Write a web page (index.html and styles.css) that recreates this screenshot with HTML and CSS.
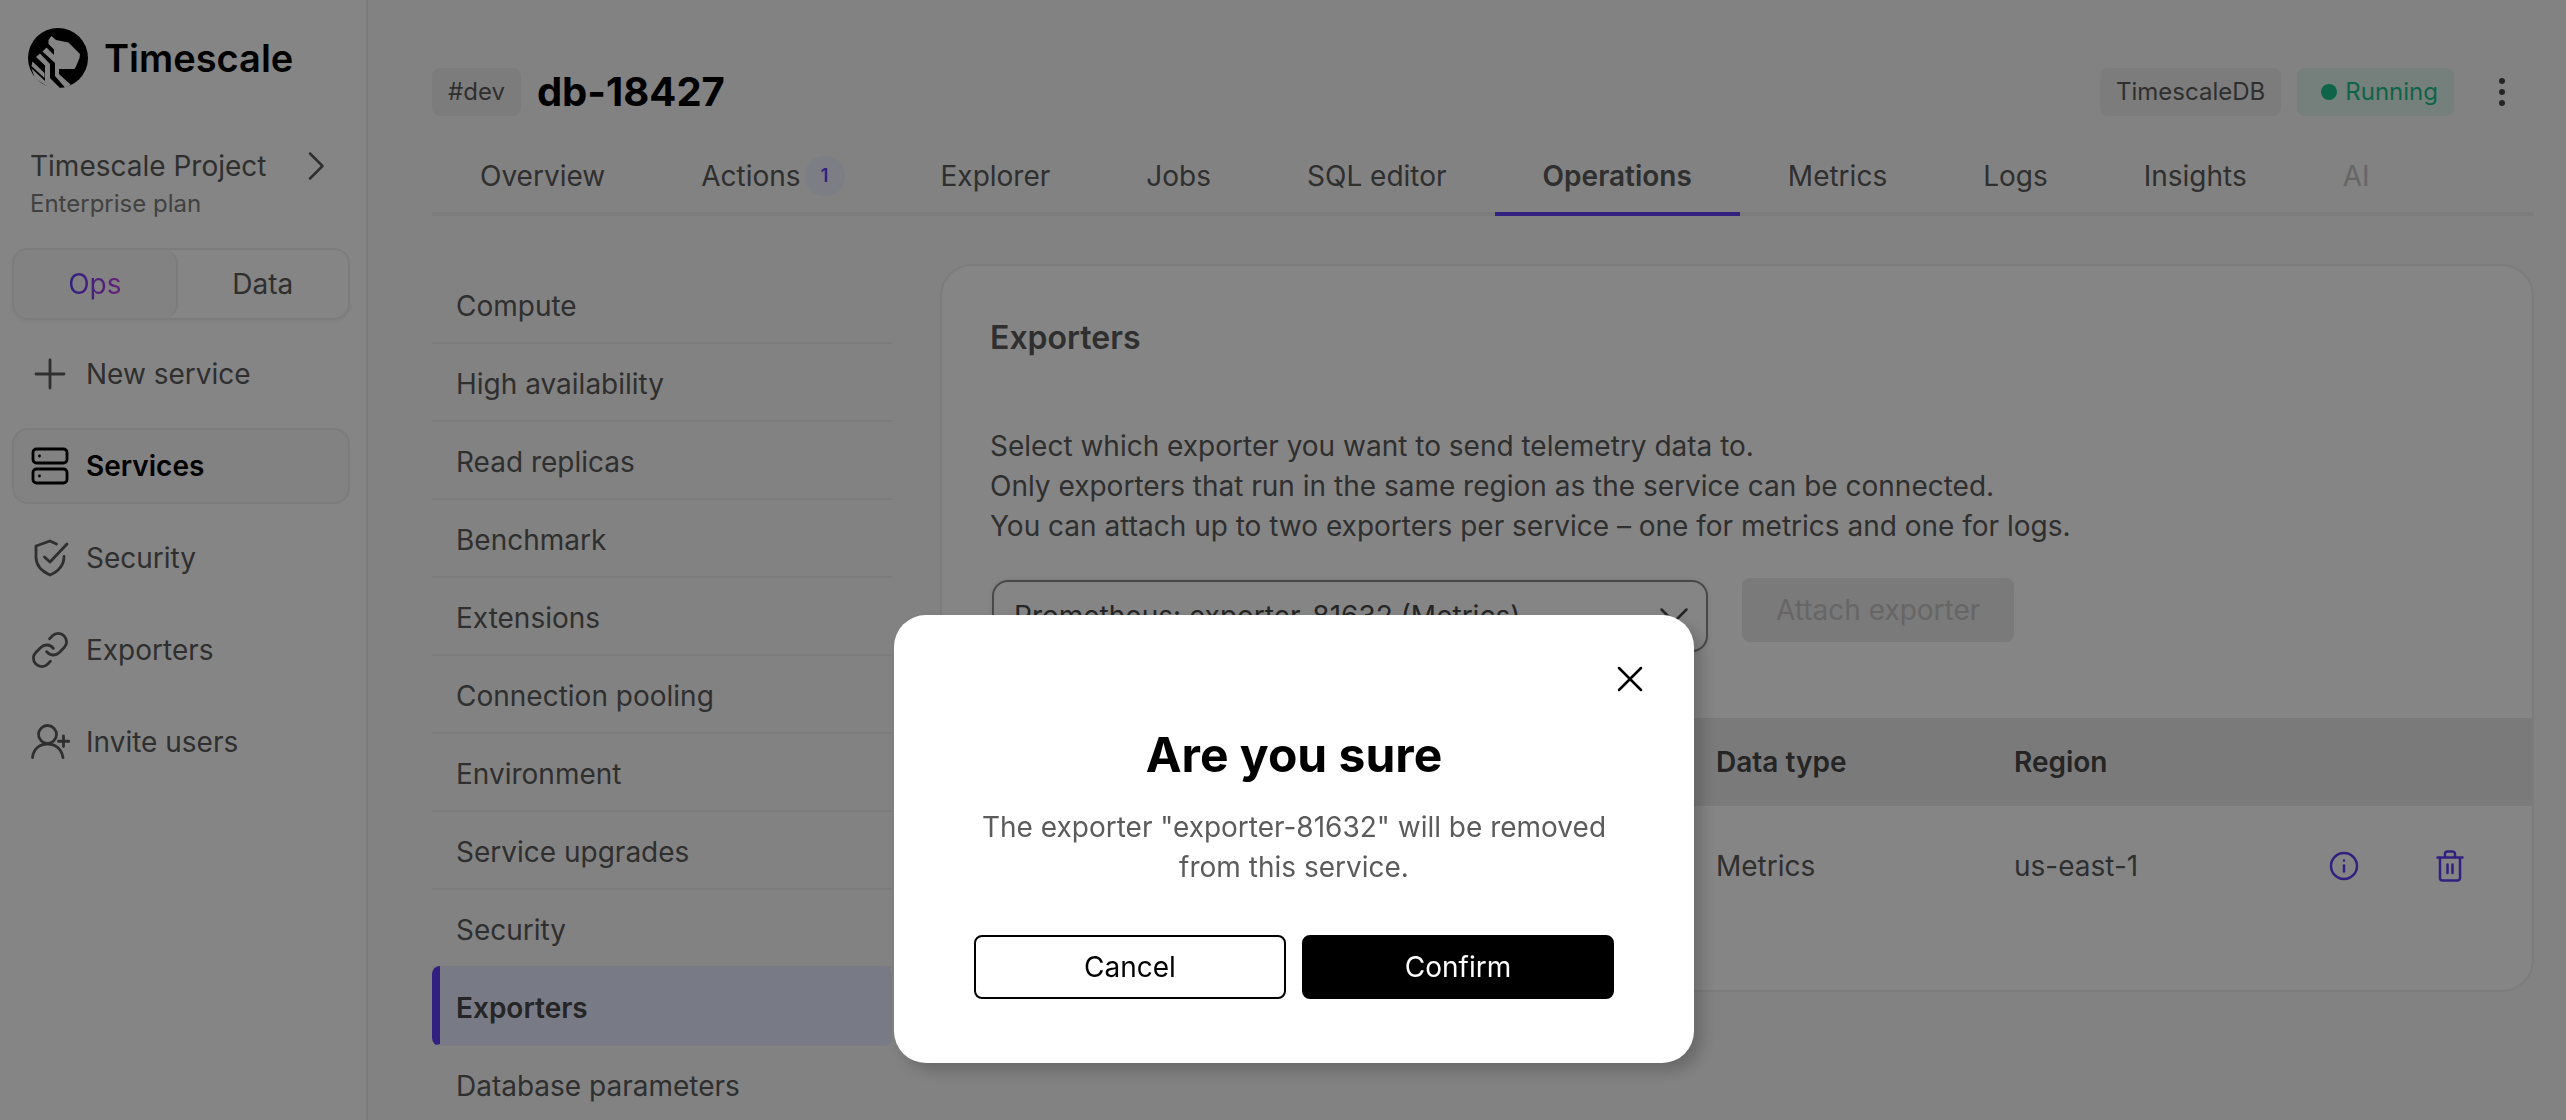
FILE: index.html
```html
<!DOCTYPE html>
<html lang="en">
<head>
  <meta charset="UTF-8" />
  <meta name="viewport" content="width=device-width, initial-scale=1.0"/>
  <title>db-18427 - Timescale</title>
  <link rel="stylesheet" href="styles.css">
</head>
<body>
  <div class="app">
    <aside class="sidebar">
      <a class="logo" href="#">
        <svg width="60" height="60" viewBox="0 0 60 60">
          <circle cx="30" cy="30" r="30" fill="#000"/>
          <path fill="#fff" d="M23.500 8l4.500 4 12.500 2.500L52 26l-.5 4L48 38.500l-1.500 2.500H31v5l12 11-6 2.500L27 48V35L14.500 23.500l4-4L24 25l2 2v-5.500L20.500 16v-4z"/>
          <path fill="#fff" d="M8 29l4-3.500L22 36v14l10 10H24L17 53.500v-16z"/>
          <path fill="#fff" d="M4.500 33.500L16.500 45v5L3.500 38zM3.500 40.500L16.500 52.500 24 59l-3 .5-14-9z"/>
        </svg>
        <span>Timescale</span>
      </a>

      <button class="project">
        <span>
          <span class="project-name">Timescale Project</span>
          <span class="project-plan">Enterprise plan</span>
        </span>
        <svg width="20" height="30" viewBox="0 0 20 30" class="icon"><path d="M4 2.500l12.500 12.500L4 27.500"/></svg>
      </button>

      <div class="toggle">
        <button class="toggle-item active"><span>Ops</span></button>
        <button class="toggle-item">Data</button>
      </div>

      <nav class="menu">
        <a class="menu-item" href="#">
          <svg width="40" height="40" viewBox="0 0 40 40" class="icon"><path d="M20 6v28M6 20h28"/></svg>
          New service
        </a>
        <a class="menu-item active" href="#">
          <svg width="40" height="40" viewBox="0 0 40 40" class="icon"><rect x="3" y="3" width="34" height="14" rx="3.500"/><rect x="3" y="23" width="34" height="14" rx="3.500"/><path d="M9.500 10v.01M9.500 30v.01"/></svg>
          Services
        </a>
        <a class="menu-item" href="#">
          <svg width="40" height="40" viewBox="0 0 40 40" class="icon"><path d="M26.500 6L20 3 6 8v11c0 8 5 14 14 18 9-4 14-10 14-18.500"/><path d="M14.500 19l5.500 5L37 6"/></svg>
          Security
        </a>
        <a class="menu-item" href="#">
          <svg width="40" height="40" viewBox="0 0 24 24" class="icon icon-24"><path d="M10 13a5 5 0 0 0 7.540.54l3-3a5 5 0 0 0-7.070-7.070l-1.720 1.710"/><path d="M14 11a5 5 0 0 0-7.540-.54l-3 3a5 5 0 0 0 7.070 7.070l1.710-1.710"/></svg>
          Exporters
        </a>
        <a class="menu-item" href="#">
          <svg width="40" height="40" viewBox="0 0 40 40" class="icon"><circle cx="17.500" cy="12.500" r="9"/><path d="M2.500 35.500C3.500 27 9.500 22 17.500 22s14 5 15.500 13.500M33.500 14v10.500M28.500 19.250H39"/></svg>
          Invite users
        </a>
      </nav>
    </aside>

    <main class="main">
      <header class="header">
        <span class="tag">#dev</span>
        <h1>db-18427</h1>
        <div class="header-right">
          <span class="tag">TimescaleDB</span>
          <span class="tag running"><i class="dot"></i>Running</span>
          <button class="more" aria-label="More">
            <svg width="8" height="30" viewBox="0 0 8 30"><circle cx="4" cy="4" r="3"/><circle cx="4" cy="15" r="3"/><circle cx="4" cy="26" r="3"/></svg>
          </button>
        </div>
      </header>

      <nav class="tabs">
        <a href="#">Overview</a>
        <a href="#">Actions <span class="badge">1</span></a>
        <a href="#">Explorer</a>
        <a href="#">Jobs</a>
        <a href="#">SQL editor</a>
        <a href="#" class="active">Operations</a>
        <a href="#">Metrics</a>
        <a href="#">Logs</a>
        <a href="#">Insights</a>
        <a href="#" class="disabled">AI</a>
      </nav>

      <div class="content">
        <nav class="subnav">
          <a href="#">Compute</a>
          <a href="#">High availability</a>
          <a href="#">Read replicas</a>
          <a href="#">Benchmark</a>
          <a href="#">Extensions</a>
          <a href="#">Connection pooling</a>
          <a href="#">Environment</a>
          <a href="#">Service upgrades</a>
          <a href="#">Security</a>
          <a href="#" class="active">Exporters</a>
          <a href="#">Database parameters</a>
        </nav>

        <section class="card">
          <h2>Exporters</h2>
          <p>
            Select which exporter you want to send telemetry data to.<br>
            Only exporters that run in the same region as the service can be connected.<br>
            You can attach up to two exporters per service – one for metrics and one for logs.
          </p>
          <div class="attach">
            <div class="select">
              <select aria-label="Exporter">
                <option>Prometheus: exporter-81632 (Metrics)</option>
              </select>
              <svg width="30" height="20" viewBox="0 0 30 20" class="icon"><path d="M2.500 3.500L15 16 27.500 3.500"/></svg>
            </div>
            <button class="btn-attach" disabled>Attach exporter</button>
          </div>
          <table>
            <thead>
              <tr>
                <th class="col-name"></th>
                <th class="col-data">Data type</th>
                <th class="col-region">Region</th>
                <th></th>
              </tr>
            </thead>
            <tbody>
              <tr>
                <td></td>
                <td>Metrics</td>
                <td>us-east-1</td>
                <td>
                  <div class="actions">
                    <button aria-label="Info">
                      <svg width="32" height="32" viewBox="0 0 32 32" class="icon"><circle cx="16" cy="16" r="13"/><path d="M16 15.500v6M16 10.500v.01"/></svg>
                    </button>
                    <button aria-label="Remove">
                      <svg width="32" height="32" viewBox="0 0 32 32" class="icon"><path d="M3.500 7.500h25M6 7.500V28a2.500 2.500 0 0 0 2.500 2.500h15A2.500 2.500 0 0 0 26 28V7.500M11 7.500V4a2.500 2.500 0 0 1 2.500-2.500h5A2.500 2.500 0 0 1 21 4v3.500M13.500 14.500v8.500M18.500 14.500v8.500"/></svg>
                    </button>
                  </div>
                </td>
              </tr>
            </tbody>
          </table>
        </section>
      </div>
    </main>
  </div>

  <div class="overlay">
    <div class="modal" role="dialog" aria-labelledby="modal-title">
      <button class="close" aria-label="Close">
        <svg width="32" height="32" viewBox="0 0 32 32" class="icon"><path d="M5 5l22 22M27 5L5 27"/></svg>
      </button>
      <h3 id="modal-title">Are you sure</h3>
      <p>The exporter "exporter-81632" will be removed from this service.</p>
      <div class="modal-buttons">
        <button class="btn-cancel">Cancel</button>
        <button class="btn-confirm">Confirm</button>
      </div>
    </div>
  </div>
</body>
</html>
```

FILE: styles.css
```css
* {
  box-sizing: border-box;
}
body {
  font-family: Inter, "Liberation Sans", sans-serif;
  font-size: 28px;
  line-height: 40px;
  color: #5b5b5b;
  background: #f9f9f9;
  margin: 0;
}
h1, h2, h3, p {
  margin: 0;
}
a {
  color: inherit;
  text-decoration: none;
}
button {
  font: inherit;
  color: inherit;
  background: none;
  border: none;
  padding: 0;
  cursor: pointer;
}
.icon {
  display: block;
  fill: none;
  stroke: currentColor;
  stroke-width: 2.5;
  stroke-linecap: round;
  stroke-linejoin: round;
  flex-shrink: 0;
}
.menu .icon {
  stroke-width: 2.8;
}
.menu .icon-24 {
  stroke-width: 1.7;
}
.app {
  display: flex;
  height: 100vh;
  overflow: hidden;
}

/* sidebar */
.sidebar {
  width: 368px;
  flex-shrink: 0;
  padding: 28px 16px 0 12px;
  background: #fff;
  border-right: 2px solid #eee;
}
.logo {
  display: flex;
  align-items: center;
  gap: 16px;
  padding-left: 16px;
  color: #000;
  font-size: 38px;
  font-weight: 600;
}
.project {
  display: flex;
  justify-content: space-between;
  align-items: flex-start;
  width: 100%;
  margin-top: 58px;
  padding: 0 24px 0 18px;
  text-align: left;
}
.project .icon {
  margin-top: 5px;
}
.project-name, .project-plan {
  display: block;
}
.project-plan {
  font-size: 24px;
  line-height: 36px;
  color: #7d7d7d;
}
.toggle {
  display: flex;
  height: 72px;
  margin: 26px 0 16px;
  border: 2px solid #eee;
  border-radius: 16px;
  box-shadow: 0 2px 4px rgba(0,0,0,0.04);
}
.toggle-item {
  flex: 1;
}
.toggle-item.active {
  flex: 0 0 49%;
  background: #f9f9f9;
  border-right: 2px solid #eee;
  border-radius: 14px;
}
.toggle-item.active span {
  background: linear-gradient(90deg, #5b3ff5, #c83fe8);
  -webkit-background-clip: text;
  background-clip: text;
  color: transparent;
}
.menu {
  display: flex;
  flex-direction: column;
  gap: 16px;
}
.menu-item {
  display: flex;
  align-items: center;
  gap: 16px;
  height: 76px;
  padding: 0 16px;
  border: 2px solid transparent;
  border-radius: 16px;
}
.menu-item.active {
  color: #000;
  font-weight: 600;
  background: #f9f9f9;
  border-color: #eee;
}

/* main */
.main {
  flex: 1;
  padding: 68px 32px 0 64px;
}
.header {
  display: flex;
  align-items: center;
  gap: 16px;
  height: 48px;
}
.header h1 {
  color: #000;
  font-size: 40px;
  font-weight: 700;
}
.tag {
  display: flex;
  align-items: center;
  height: 48px;
  padding: 0 16px;
  font-size: 24px;
  background: #eee;
  border-radius: 8px;
}
.header-right {
  display: flex;
  gap: 16px;
  margin-left: auto;
}
.running {
  color: #19c08a;
  background: #e0f5ef;
  padding-left: 24px;
}
.dot {
  width: 16px;
  height: 16px;
  margin-right: 8px;
  border-radius: 50%;
  background: #19c08a;
}
.more {
  display: flex;
  justify-content: center;
  align-items: center;
  width: 64px;
  fill: #474747;
}
.tabs {
  display: flex;
  margin-top: 24px;
  box-shadow: inset 0 -4px #eee;
}
.tabs a {
  display: flex;
  gap: 4px;
  padding: 16px 48px;
  border-bottom: 4px solid transparent;
}
.tabs a.active {
  font-weight: 600;
  border-color: #613ff5;
}
.tabs a.disabled {
  color: #c4c4c4;
}
.badge {
  width: 40px;
  height: 40px;
  border-radius: 50%;
  background: #edf0ff;
  color: #613ff5;
  font-size: 18px;
  font-weight: 600;
  text-align: center;
}
.content {
  display: grid;
  grid-template-columns: 460px 1fr;
  gap: 48px;
  align-items: start;
  margin-top: 48px;
}
.subnav {
  padding-top: 2px;
}
.subnav a {
  display: block;
  padding: 20px 24px 16px;
  border-bottom: 2px solid #eee;
}
.subnav a.active {
  margin-top: -2px;
  padding: 22px 24px 16px 16px;
  color: #474747;
  font-weight: 600;
  background: #e6ecff;
  border-left: 8px solid #613ff5;
  border-bottom-color: #e6ecff;
  border-radius: 8px;
}

/* card */
.card {
  background: #fff;
  border: 2px solid #eee;
  border-radius: 32px;
  padding: 48px 0 64px;
}
.card h2 {
  padding: 4px 48px 0;
  font-size: 32px;
  line-height: 40px;
  font-weight: 600;
}
.card p {
  padding: 68px 48px 0;
}
.attach {
  display: flex;
  align-items: flex-start;
  gap: 34px;
  margin-top: 32px;
  padding: 0 50px;
}
.select {
  position: relative;
  width: 716px;
  margin-top: 2px;
}
.select select {
  appearance: none;
  display: block;
  width: 100%;
  height: 72px;
  padding: 0 20px;
  font: inherit;
  color: #474747;
  background: #fff;
  border: 2px solid #8a8a8a;
  border-radius: 16px;
  box-shadow: 0 0 4px rgba(0,0,0,0.1);
}
.select .icon {
  position: absolute;
  right: 19px;
  top: 26px;
  color: #474747;
  pointer-events: none;
}
.btn-attach {
  height: 64px;
  padding: 0 34px;
  color: #c4c4c4;
  background: #eaeaea;
  border-radius: 8px;
}
table {
  width: 100%;
  margin-top: 66px;
  border-collapse: collapse;
  table-layout: fixed;
  text-align: left;
}
th {
  height: 88px;
  padding: 0 0 0 48px;
  color: #474747;
  font-weight: 600;
  background: #eaeaea;
}
td {
  height: 120px;
  padding: 0 0 0 48px;
}
.col-name {
  width: 726px;
}
.col-data, .col-region {
  width: 298px;
}
.actions {
  display: flex;
  justify-content: flex-end;
  gap: 74px;
  padding-right: 66px;
  color: #613ff5;
}

/* dialog */
.overlay {
  position: fixed;
  inset: 0;
  display: flex;
  justify-content: center;
  align-items: flex-end;
  padding: 0 0 57px 22px;
  background: rgba(0,0,0,0.48);
}
.modal {
  position: relative;
  width: 800px;
  padding: 112px 80px 64px;
  background: #fff;
  border-radius: 32px;
  box-shadow: 8px 8px 16px rgba(0,0,0,0.2);
  text-align: center;
}
.modal h3 {
  color: #000;
  font-size: 48px;
  line-height: 56px;
  font-weight: 700;
}
.modal p {
  margin: 24px 0 48px;
}
.close {
  position: absolute;
  top: 48px;
  right: 48px;
  color: #000;
}
.modal-buttons {
  display: flex;
  gap: 16px;
}
.modal-buttons button {
  flex: 1;
  height: 64px;
  border: 2px solid #000;
  border-radius: 8px;
}
.btn-cancel {
  color: #000;
}
.modal-buttons .btn-confirm {
  color: #fff;
  background: #000;
}
```
